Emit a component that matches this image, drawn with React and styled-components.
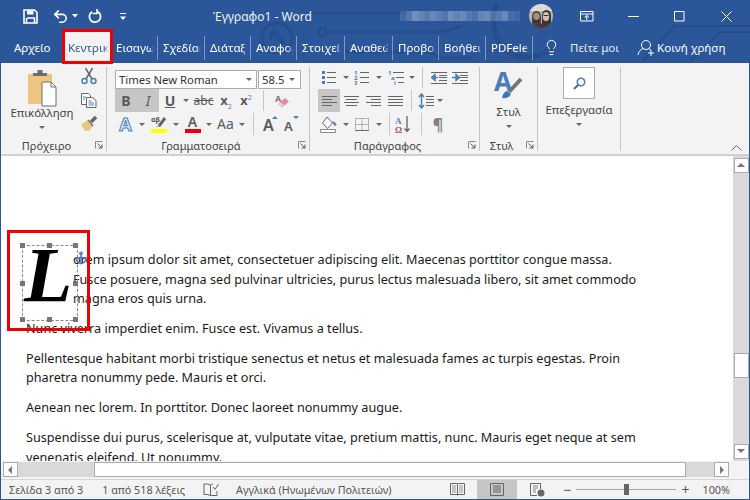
import React from 'react'
import styled, { createGlobalStyle } from 'styled-components'
import { Lightbulb, Anchor, Undo2 } from 'lucide-react'

const GlobalStyle = createGlobalStyle`
    html, body { margin: 0; padding: 0; background: #2b579a; }
    * { box-sizing: border-box; }
`

const UI_FONT = `"Noto Sans", "Open Sans", sans-serif`
const GREY = '#5a5a5a'
const BLUE = '#4a7ebb'

const Window = styled.div`
    position: relative;
    width: 750px;
    height: 500px;
    overflow: hidden;
    background: #2b579a;
    display: flex;
    flex-direction: column;
    font-family: ${UI_FONT};
`

/* ---------- title bar + tabs ---------- */
const Header = styled.header`
    position: relative;
    height: 63px;
    flex: none;
`
const CircuitArt = styled.svg`
    position: absolute;
    top: 0;
    left: 0;
`
const TitleBar = styled.div`
    position: relative;
    height: 32px;
    display: flex;
    align-items: center;
    padding-left: 22px;
    color: #fff;
`
const Slot = styled.div`
    flex: none;
    display: flex;
    align-items: center;
    justify-content: center;
    width: ${p => p.$w}px;
    margin-left: ${p => p.$ml || 0}px;
`
const Title = styled.div`
    margin-left: 82px;
    width: 100px;
    font-size: 12px;
    white-space: nowrap;
    color: #eef2f8;
`
const RightCluster = styled.div`
    margin-left: auto;
    display: flex;
    align-items: center;
    padding-right: 1px;
`
const BlurName = styled.svg`
    margin-right: 9px;
`
const Avatar = styled.svg`
    margin-right: 11px;
`
const TabRow = styled.nav`
    position: relative;
    height: 31px;
    display: flex;
    align-items: center;
    color: #fff;
    font-size: 11.5px;
`
const FileTab = styled.div`
    width: 64px;
    padding-left: 14px;
    flex: none;
`
const ActiveTab = styled.div`
    position: relative;
    align-self: stretch;
    flex: none;
    width: 47px;
    background: #f3f3f3;
    color: #2b579a;
    display: flex;
    align-items: center;
    padding-left: 4px;
    padding-right: 2px;
    &::after {
        content: '';
        position: absolute;
        inset: -3px -2px -1px -2px;
        border: 3px solid #f00000;
    }
`
const Tab = styled.div`
    flex: none;
    width: ${p => p.$w}px;
    height: 24px;
    padding: 0 3px 0 5px;
    display: flex;
    align-items: center;
    border-right: 1px solid rgba(255, 255, 255, .4);
`
const TabText = styled.span`
    display: block;
    overflow: hidden;
    white-space: nowrap;
    -webkit-mask-image: linear-gradient(to right, #000 88%, transparent);
    mask-image: linear-gradient(to right, #000 88%, transparent);
`
const TellMe = styled.div`
    margin-left: 10px;
    display: flex;
    align-items: center;
    color: #e4eaf4;
    span { margin-left: 10px; }
`
const Share = styled.div`
    margin-left: 18px;
    display: flex;
    align-items: center;
    span { margin-left: 2px; white-space: nowrap; }
`

/* ---------- ribbon ---------- */
const Ribbon = styled.div`
    height: 93px;
    flex: none;
    margin: 0 1px;
    display: flex;
    background: #f3f3f3;
    border-bottom: 2px solid #d0d0d0;
    color: #444;
`
const Group = styled.section`
    flex: none;
    width: ${p => p.$w}px;
    display: flex;
    flex-direction: column;
`
const GroupBody = styled.div`
    flex: 1;
    min-height: 0;
    display: flex;
    flex-direction: ${p => p.$col ? 'column' : 'row'};
    padding: ${p => p.$pad || '0'};
`
const GroupFoot = styled.div`
    height: 18px;
    flex: none;
    display: flex;
    align-items: center;
    font-size: 11px;
`
const GroupLabel = styled.div`
    flex: 1;
    text-align: center;
`
const Launcher = styled.svg`
    flex: none;
    margin: 0 3px;
`
const GroupRule = styled.div`
    flex: none;
    width: 1px;
    height: 84px;
    margin-top: 4px;
    background: #c6c6c6;
`
const BigButton = styled.div`
    display: flex;
    flex-direction: column;
    align-items: center;
    width: ${p => p.$w}px;
    margin-left: ${p => p.$ml || 0}px;
    padding-top: ${p => p.$pt || 0}px;
    font-size: 11.4px;
    white-space: nowrap;
`
const BigLabel = styled.div`
    margin-top: ${p => p.$mt}px;
    line-height: 16px;
`
const BigCaret = styled.div`
    flex: none;
    height: 12px;
    display: flex;
    align-items: center;
    &::before {
        content: '';
        border: 3px solid transparent;
        border-top-color: #666;
        border-bottom-width: 0;
    }
`
const SmallStack = styled.div`
    display: flex;
    flex-direction: column;
    align-items: center;
    width: 24px;
    margin-left: 3px;
    padding-top: 5px;
    gap: 8px;
`
const ToolRow = styled.div`
    display: flex;
    height: ${p => p.$h || 23}px;
    flex: none;
`
const Tool = styled.div`
    flex: none;
    display: flex;
    align-items: center;
    justify-content: center;
    width: ${p => p.$w || 22}px;
    background: ${p => p.$on ? '#c6c6c6' : 'transparent'};
`
const CaretBox = styled.div`
    flex: none;
    width: ${p => p.$w || 10}px;
    display: flex;
    align-items: center;
    justify-content: center;
    &::before {
        content: '';
        border: 3px solid transparent;
        border-top-color: #666;
        border-bottom-width: 0;
    }
`
const ToolRule = styled.div`
    flex: none;
    width: ${p => p.$w}px;
    display: flex;
    justify-content: center;
    padding: 1px 0;
    &::before {
        content: '';
        width: 1px;
        background: #c6c6c6;
    }
`
const Combo = styled.div`
    flex: none;
    width: ${p => p.$w}px;
    margin-right: ${p => p.$mr || 0}px;
    height: 19px;
    display: flex;
    align-items: center;
    justify-content: space-between;
    padding: 0 3px 0 3px;
    background: #fff;
    border: 1px solid #ababab;
    color: #333;
    font-size: 11.3px;
`
const Glyph = styled.span`
    font-family: ${p => p.$serif ? '"Liberation Serif", serif' : UI_FONT};
    font-size: ${p => p.$size || 13}px;
    font-weight: ${p => p.$bold ? 700 : 400};
    font-style: ${p => p.$italic ? 'italic' : 'normal'};
    text-decoration: ${p => p.$deco || 'none'};
    color: ${p => p.$color || GREY};
    line-height: 1;
    sub, sup { font-size: 7px; color: ${BLUE}; line-height: 0; font-weight: 400; }
`
const OutlineA = styled.span`
    font-size: 18px;
    font-weight: 700;
    line-height: 1;
    color: #e3edf8;
    -webkit-text-stroke: 1px ${BLUE};
`
const ColorA = styled.div`
    display: flex;
    flex-direction: column;
    align-items: center;
    width: ${p => p.$w || 16}px;
    span { font-size: 14px; line-height: 13px; color: ${GREY}; font-weight: 600; }
    i { display: block; width: 100%; height: 4px; margin-top: 1px; background: ${p => p.$bar}; }
`
const GrowA = styled.div`
    position: relative;
    width: 16px;
    height: 18px;
    span { position: absolute; left: 1px; bottom: 0; line-height: 1; font-size: ${p => p.$size}px; color: ${GREY}; font-weight: 600; }
    i {
        position: absolute;
        right: 0;
        top: 1px;
        border: 3px solid transparent;
        ${p => p.$up ? `border-bottom-color: ${BLUE}; border-top-width: 0;` : `border-top-color: ${BLUE}; border-bottom-width: 0;`}
    }
`
const SearchBox = styled.div`
    width: 32px;
    height: 32px;
    background: #fff;
    border: 1px solid #ababab;
    display: flex;
    align-items: center;
    justify-content: center;
`
const Collapse = styled.div`
    flex: 1;
    display: flex;
    justify-content: flex-end;
    align-items: flex-end;
    padding: 0 7px 3px 0;
`

/* ---------- document ---------- */
const DocArea = styled.div`
    flex: 1;
    min-height: 0;
    margin: 0 1px;
    display: flex;
    background: #fff;
`
const Page = styled.main`
    flex: 1;
    min-width: 0;
    overflow: hidden;
    padding: 94px 0 0 25px;
    font-size: 12.65px;
    line-height: 19.5px;
    color: #1a1a1a;
    white-space: nowrap;
`
const Para = styled.p`
    margin: 0 0 10.4px;
`
const DropCap = styled.div`
    position: relative;
    float: left;
    width: 47px;
    height: 58px;
`
const CapFrame = styled.div`
    position: absolute;
    left: -4px;
    top: -5px;
    width: 56px;
    height: 76px;
    padding-left: 1px;
    border: 1px dashed #8a8a8a;
    font-family: "Liberation Serif", serif;
    font-size: 79px;
    font-weight: 700;
    font-style: italic;
    line-height: 57px;
    color: #000;
`
const Handle = styled.i`
    position: absolute;
    width: 5px;
    height: 5px;
    background: #767676;
    left: ${p => p.$x}px;
    top: ${p => p.$y}px;
`
const CapAnchor = styled.div`
    position: absolute;
    left: 48px;
    top: 1px;
    color: ${BLUE};
    display: flex;
`
const RedMark = styled.div`
    position: absolute;
    left: -19px;
    top: -20px;
    width: 83px;
    height: 101px;
    border: 3px solid #f00000;
`
const VScroll = styled.div`
    flex: none;
    width: 16px;
    background: #d9d9d9;
    display: flex;
    flex-direction: column;
    align-items: center;
    padding: 2px 0 2px;
`
const ScrollBtn = styled.div`
    flex: none;
    width: 15px;
    height: 15px;
    background: #fdfdfd;
    border: 1px solid #ababab;
    display: flex;
    align-items: center;
    justify-content: center;
    svg { display: block; }
`
const VThumb = styled.div`
    width: 15px;
    height: 25px;
    margin-top: 180px;
    margin-bottom: auto;
    background: #fff;
    border: 1px solid #ababab;
`
const HScroll = styled.div`
    height: 18px;
    flex: none;
    margin: 0 1px;
    background: #f3f3f3;
    display: flex;
    align-items: flex-start;
    padding: 1px 0 0 2px;
`
const HTrack = styled.div`
    flex: none;
    width: 726px;
    height: 15px;
    background: #d9d9d9;
    display: flex;
    align-items: center;
`
const HThumb = styled.div`
    width: 594px;
    height: 15px;
    margin-left: 76px;
    margin-right: 28px;
    background: #fff;
    border: 1px solid #ababab;
`

/* ---------- status bar ---------- */
const StatusBar = styled.footer`
    height: 20px;
    flex: none;
    margin: 0 1px 1px;
    display: flex;
    align-items: center;
    background: #f3f3f3;
    border-top: 1px solid #d6d6d6;
    font-size: 10.8px;
    color: #555;
    white-space: nowrap;
`
const StatusText = styled.span`
    margin-left: ${p => p.$ml}px;
`
const ViewBtn = styled.div`
    flex: none;
    align-self: stretch;
    width: 40px;
    display: flex;
    align-items: center;
    justify-content: center;
    background: ${p => p.$on ? '#c6c6c6' : 'transparent'};
`
const StatusRight = styled.div`
    margin-left: auto;
    display: flex;
    align-items: center;
    align-self: stretch;
`
const Zoom = styled.div`
    display: flex;
    align-items: center;
    margin-left: 6px;
`
const ZoomSign = styled.span`
    font-size: 14px;
    line-height: 1;
`
const SliderTrack = styled.div`
    position: relative;
    width: 100px;
    height: 1px;
    margin: 0 5px;
    background: #a8a8a8;
    &::after {
        content: '';
        position: absolute;
        left: 48px;
        top: -5px;
        width: 5px;
        height: 11px;
        background: #666;
    }
`
const ZoomPct = styled.span`
    margin: 0 19px 0 13px;
`

/* ---------- drawings ---------- */
const Svg = ({ w, h, children }) => (
    <svg width={w} height={h} viewBox={`0 0 ${w} ${h}`} fill="none" style={{ display: 'block', flex: 'none' }}>{children}</svg>
)

const SaveIcon = () => (
    <Svg w={15} h={15}>
        <path d="M1 1h10.5L14 3.5V14H1z" stroke="#fff" strokeWidth="1.6" />
        <path d="M4 1.5h6.5v4H4z" fill="#fff" />
        <path d="M4 9h7.5v5" stroke="#fff" strokeWidth="1.6" />
        <path d="M3.5 9v5" stroke="#fff" strokeWidth="1.6" />
    </Svg>
)
const RepeatIcon = () => (
    <Svg w={16} h={16}>
        <path d="M10.5 3.6a5.6 5.6 0 1 1-5.4.2" stroke="#fff" strokeWidth="1.8" />
        <path d="M10 1v4.5H5.5" stroke="#fff" strokeWidth="1.6" />
    </Svg>
)
const CustomizeIcon = () => (
    <Svg w={8} h={9}>
        <path d="M1 1.5h6" stroke="#fff" />
        <path d="M1 4.5h6L4 8z" fill="#fff" />
    </Svg>
)
const SmallCaret = () => (
    <Svg w={6} h={4}><path d="M0 0h6L3 3.5z" fill="#fff" /></Svg>
)
const RestoreIcon = () => (
    <Svg w={14} h={11}>
        <path d="M.5.5h12.5v9.5H.5zM.5 3h12.5" stroke="#fff" />
        <path d="M6.75 9V4.5M4.5 6.5l2.25-2.2L9 6.5" stroke="#fff" />
    </Svg>
)
const MinIcon = () => <Svg w={11} h={3}><path d="M0 1.5h11" stroke="#fff" /></Svg>
const MaxIcon = () => <Svg w={11} h={11}><path d="M.5.5h9.5v9.5H.5z" stroke="#fff" /></Svg>
const CloseIcon = () => <Svg w={11} h={11}><path d="M.5.5l10 10M10.5.5l-10 10" stroke="#fff" /></Svg>
const ShareIcon = () => (
    <Svg w={18} h={17}>
        <circle cx="9" cy="6" r="4.5" stroke="#fff" />
        <path d="M1 16c.5-4 3-5.5 5-6.5M12 10c.8.3 1.4.7 2 1.2" stroke="#fff" />
        <path d="M14 11v6M11 14h6" stroke="#fff" />
    </Svg>
)
const AvatarArt = () => (
    <Avatar width="24" height="24" viewBox="0 0 24 24">
        <defs><clipPath id="av"><circle cx="12" cy="12" r="12" /></clipPath></defs>
        <g clipPath="url(#av)">
            <rect width="24" height="24" fill="#b9b5ae" />
            <rect y="0" width="24" height="7" fill="#dcdad6" />
            <path d="M3 24V13q0-6 4.5-6t4.5 6v11z" fill="#4c4541" />
            <ellipse cx="7.5" cy="12.5" rx="3.2" ry="3.8" fill="#a58f80" />
            <path d="M4.5 14q3 4.5 6 0v5h-6z" fill="#3a3431" />
            <path d="M13 24V12q0-6 4.5-6t4.5 6v12z" fill="#3a3432" />
            <ellipse cx="17" cy="12.5" rx="3.2" ry="4.5" fill="#d8bfb0" />
            <path d="M14.5 11.5h5" stroke="#333" strokeWidth="1.2" />
            <path d="M4 24q3-5 8-4.5t8 4.5z" fill="#50323f" />
        </g>
    </Avatar>
)

const BLUR = [.12, .2, .34, .28, .22, .3, .24, .18, .32, .26, .3, .2, .16, .28, .3, .2, .22, .3, .14, .1]
const BlurArt = () => (
    <BlurName width="120" height="14" viewBox="0 0 120 14">
        {BLUR.map((o, i) => <rect key={`blur-${i}`} x={i * 6} y="2" width="6" height="10" fill="#fff" opacity={o} />)}
    </BlurName>
)

const Circuit = () => (
    <CircuitArt width="750" height="63" viewBox="0 0 750 63" fill="none" stroke="#264e8d" strokeWidth="3">
        <path d="M312 13h95" />
        <circle cx="277" cy="38" r="15" />
        <path d="M284 44l-12-12M271 40v-8h8" />
        <circle cx="323" cy="32" r="4" />
        <path d="M327 32h115l20-6" />
        <path d="M345 52h85l12 6h30" />
        <path d="M497 3a42 42 0 0 0 12 50 42 42 0 0 0 45-6" strokeWidth="5" />
        <path d="M642 62l32-36h76M690 62l30-30h30" strokeWidth="2" />
    </CircuitArt>
)

const Clipboard = () => (
    <Svg w={30} h={38}>
        <path d="M1 4h24v25H15v5H1z" fill="#eec57e" />
        <path d="M6 6V3h4.5V0h5v3H20v3z" fill="#6d6d6d" />
        <path d="M15 12h9l5 5v19H15z" fill="#fff" stroke="#6e6e6e" />
        <path d="M24 12v5h5" stroke="#6e6e6e" />
    </Svg>
)
const Scissors = () => (
    <Svg w={16} h={17}>
        <circle cx="3.5" cy="13" r="2.5" stroke={BLUE} strokeWidth="1.5" />
        <circle cx="12.5" cy="13" r="2.5" stroke={BLUE} strokeWidth="1.5" />
        <path d="M5 11L11.5 0M11 11L4.5 0" stroke="#666" strokeWidth="1.5" />
    </Svg>
)
const CopyIcon = () => (
    <Svg w={16} h={15}>
        <path d="M.5.5h7l2 2v9H.5z" fill="#fff" stroke="#666" />
        <path d="M5.5 4.5h6l3.5 3v7H5.5z" fill="#fff" stroke="#666" />
        <path d="M7.5 8h3M7.5 10h5.5M7.5 12h5.5M2 4h3M2 6h2" stroke={BLUE} />
    </Svg>
)
const BrushIcon = () => (
    <Svg w={17} h={15}>
        <path d="M0 8.5L7 4l5 6-4 5H4z" fill="#eec57e" />
        <path d="M7 4l5 6" stroke="#777" strokeWidth="1.5" />
        <path d="M10 6l5-5" stroke="#666" strokeWidth="3.5" />
    </Svg>
)
const Highlighter = () => (
    <ColorA $w={16} $bar="#ffff00">
        <Svg w={16} h={13}>
            <text x="0" y="7" fontSize="7" fontWeight="700" fill="#555" fontFamily="Noto Sans">αβ</text>
            <path d="M8 11l6-8" stroke="#666" strokeWidth="3" />
            <path d="M5 12l3-2 1.5 1.5z" fill="#888" />
        </Svg>
        <i />
    </ColorA>
)
const Eraser = () => (
    <Svg w={15} h={14}>
        <text x="0" y="8" fontSize="9" fontWeight="700" fill="#777" fontFamily="Noto Sans">A</text>
        <path d="M3 10l7-6 4 3.5-7 6z" fill="#e8879b" />
        <path d="M3 10l2.5-2 4 3.5L7 13.5z" fill="#f4c7d0" />
    </Svg>
)

const Lines = ({ rows, x = 0, w = 16 }) => rows.map(([y, a, b], i) => (
    <path key={`l-${i}`} d={`M${x + a} ${y}.5H${x + (b ?? w)}`} stroke="#666" />
))
const ListIcon = ({ kind }) => (
    <Svg w={16} h={15}>
        {kind === 'bullets' && [2, 7, 12].map(y => <rect key={y} x="1" y={y - 1} width="3" height="3" fill={BLUE} />)}
        {kind === 'numbers' && [['1', 5], ['2', 10], ['3', 15]].map(([n, y]) => <text key={n} x="0" y={y} fontSize="6" fontWeight="700" fill={BLUE} fontFamily="Noto Sans">{n}</text>)}
        {kind === 'multi' && <>
            <text x="0" y="5" fontSize="6" fontWeight="700" fill={BLUE} fontFamily="Noto Sans">1</text>
            <text x="3" y="10" fontSize="6" fontWeight="700" fill={BLUE} fontFamily="Noto Sans">a</text>
            <text x="6" y="15" fontSize="6" fontWeight="700" fill={BLUE} fontFamily="Noto Sans">i</text>
        </>}
        {kind === 'multi'
            ? <Lines rows={[[2, 5], [7, 8], [12, 10]]} />
            : <Lines rows={[[2, 6, 15], [7, 6, 15], [12, 6, 15]]} />}
    </Svg>
)
const IndentIcon = ({ out }) => (
    <Svg w={16} h={12}>
        <Lines rows={[[0, 0], [11, 0]]} />
        <Lines rows={[[3, 8], [5, 8], [8, 8]]} />
        <path d={out ? 'M7 5.5H3M4 2.5L.5 5.5 4 8.5z' : 'M0 5.5h4M4 2.5l3.5 3L4 8.5z'} stroke={BLUE} fill={BLUE} strokeWidth="1.4" />
    </Svg>
)
const AlignIcon = ({ rows }) => (
    <Svg w={15} h={11}><Lines rows={rows} /></Svg>
)
const LineSpacing = () => (
    <Svg w={17} h={16}>
        <path d="M3.5 1v14M1 4l2.5-3L6 4M1 12l2.5 3L6 12" stroke={BLUE} strokeWidth="1.5" />
        <Lines rows={[[3, 8], [6, 8], [9, 8], [12, 8]]} w={16} />
    </Svg>
)
const Shading = () => (
    <Svg w={18} h={17}>
        <path d="M7 1l5.5 6-5 5.5L2.5 7z" fill="#fff" stroke="#666" />
        <path d="M12 5q4 1 4.5 4l-2 1z" fill={BLUE} />
        <path d="M.5 13.5h15v3H.5z" fill="#fff" stroke="#888" />
    </Svg>
)
const Borders = () => (
    <Svg w={14} h={13}>
        <path d="M.5.5h13v12H.5zM7 .5v12M.5 6.5h13" stroke="#777" strokeDasharray="1 1" />
        <path d="M.5 12.5h13" stroke="#666" />
    </Svg>
)
const SortIcon = () => (
    <Svg w={16} h={17}>
        <text x="0" y="8" fontSize="9" fontWeight="700" fill={BLUE} fontFamily="Liberation Serif">A</text>
        <text x="0" y="16.5" fontSize="9" fontWeight="700" fill="#a2506f" fontFamily="Liberation Serif">Ω</text>
        <path d="M12 0v15M9.5 12.5L12 15.5l2.5-3" stroke="#666" strokeWidth="1.3" />
    </Svg>
)
const StyleIcon = () => (
    <Svg w={30} h={30}>
        <text x="0" y="21" fontSize="26" fontWeight="700" fill={BLUE} fontFamily="Noto Sans">A</text>
        <path d="M15 22l12-13" stroke="#767676" strokeWidth="4" />
        <path d="M8 28q1-6 5-7l4 3q-2 5-9 4z" fill="#3b78c4" />
    </Svg>
)
const SearchIcon = () => (
    <Svg w={13} h={13}>
        <circle cx="8" cy="5" r="3.7" stroke={BLUE} strokeWidth="1.6" />
        <path d="M5.3 7.7L1 12" stroke="#666" strokeWidth="2" />
    </Svg>
)
const LauncherIcon = () => (
    <Launcher width="8" height="8" viewBox="0 0 8 8" fill="none">
        <path d="M.5 7.5v-7h7" stroke="#888" />
        <path d="M2.5 2.5l4 4M7 3.5V7H3.5" stroke="#555" />
    </Launcher>
)
const BookCheck = () => (
    <Svg w={16} h={13}>
        <path d="M7.5 2Q4 .5 1 1v10.5q3-.5 6.5 1V2q1-1 2.5-1" stroke="#666" />
        <path d="M8 12.5h6V8" stroke="#666" />
        <path d="M10 4l2 2.5L15.5 1" stroke="#666" />
    </Svg>
)
const ReadIcon = () => (
    <Svg w={15} h={13}>
        <path d="M.5.5h6.5l.5.5.5-.5h6.5v11H8l-.5.8-.5-.8H.5zM7.5 1v11" stroke="#666" />
        <path d="M2 3h4M2 5h4M2 7h4M2 9h4M9 3h4M9 5h4M9 7h4M9 9h4" stroke="#999" />
    </Svg>
)
const PrintIcon = () => (
    <Svg w={14} h={13}>
        <path d="M.5.5h13v12H.5z" stroke="#666" />
        <path d="M3 3h8M3 5h8M3 7h8M3 9h8" stroke="#666" />
    </Svg>
)
const WebIcon = () => (
    <Svg w={15} h={14}>
        <path d="M7 12.5H.5V.5h10V6" stroke="#666" />
        <path d="M3 3h5M3 5h5M3 7h3M3 9h3" stroke="#888" />
        <circle cx="11" cy="10" r="3.5" fill="#666" />
    </Svg>
)
const Chevron = () => (
    <Svg w={11} h={6}><path d="M.5 5.5l5-5 5 5" stroke="#666" /></Svg>
)
const Tri = ({ dir }) => {
    const d = { up: 'M1 6h8L5 2z', down: 'M1 2h8L5 6z', left: 'M6 1v8L2 5z', right: 'M3 1v8l4-4z' }[dir]
    return <svg width="10" height="10" viewBox="0 0 10 10"><path d={d} fill="#777" /></svg>
}

const TABS = [
    ['Εισαγωγή', 47], ['Σχεδίαση', 47], ['Διάταξη', 46], ['Αναφορές', 46], ['Στοιχεία', 48],
    ['Αναθεώρηση', 48], ['Προβολή', 46], ['Βοήθεια', 47], ['PDFelement', 47],
]

const HANDLES = [[-3, -3], [24, -3], [50, -3], [-3, 35], [50, 35], [-3, 71], [24, 71], [50, 71]]

export default function App() {
    return (
        <Window>
            <GlobalStyle />
            <Header>
                <Circuit />
                <TitleBar>
                    <Slot $w={16}><SaveIcon /></Slot>
                    <Slot $w={20} $ml={12}><Undo2 size={17} color="#fff" strokeWidth={2.2} /></Slot>
                    <Slot $w={10}><SmallCaret /></Slot>
                    <Slot $w={20} $ml={5}><RepeatIcon /></Slot>
                    <Slot $w={16} $ml={10}><CustomizeIcon /></Slot>
                    <Title>Έγγραφο1  -  Word</Title>
                    <RightCluster>
                        <BlurArt />
                        <AvatarArt />
                        <Slot $w={46}><RestoreIcon /></Slot>
                        <Slot $w={46}><MinIcon /></Slot>
                        <Slot $w={47}><MaxIcon /></Slot>
                        <Slot $w={46}><CloseIcon /></Slot>
                    </RightCluster>
                </TitleBar>
                <TabRow>
                    <FileTab>Αρχείο</FileTab>
                    <ActiveTab><TabText>Κεντρική</TabText></ActiveTab>
                    {TABS.map(([label, w]) => (
                        <Tab key={label} $w={w}><TabText>{label}</TabText></Tab>
                    ))}
                    <TellMe>
                        <Lightbulb size={17} color="#fff" strokeWidth={1.4} />
                        <span>Πείτε μοι</span>
                    </TellMe>
                    <Share>
                        <ShareIcon />
                        <span>Κοινή χρήση</span>
                    </Share>
                </TabRow>
            </Header>

            <Ribbon>
                <Group $w={105}>
                    <GroupBody>
                        <BigButton $w={64} $ml={9} $pt={7}>
                            <Clipboard />
                            <BigLabel $mt={-3}>Επικόλληση</BigLabel>
                            <BigCaret />
                        </BigButton>
                        <SmallStack>
                            <Scissors />
                            <CopyIcon />
                            <BrushIcon />
                        </SmallStack>
                    </GroupBody>
                    <GroupFoot><GroupLabel>Πρόχειρο</GroupLabel><LauncherIcon /></GroupFoot>
                </Group>
                <GroupRule />
                <Group $w={202}>
                    <GroupBody $col $pad="7px 0 0 8px">
                        <ToolRow $h={19}>
                            <Combo $w={142} $mr={1}>
                                <span>Times New Roman</span><CaretBox $w={8} />
                            </Combo>
                            <Combo $w={43}>
                                <span>58.5</span><CaretBox $w={10} />
                            </Combo>
                        </ToolRow>
                        <ToolRow>
                            <Tool $on><Glyph $bold $size={14}>B</Glyph></Tool>
                            <Tool $on><Glyph $italic $size={14}>I</Glyph></Tool>
                            <Tool><Glyph $bold $size={14} $deco="underline">U</Glyph></Tool>
                            <CaretBox />
                            <Tool $w={25}><Glyph $size={12} $deco="line-through">abc</Glyph></Tool>
                            <Tool $w={20}><Glyph $bold $size={13}>x<sub>2</sub></Glyph></Tool>
                            <Tool $w={20}><Glyph $bold $size={13}>x<sup>2</sup></Glyph></Tool>
                            <ToolRule $w={14} />
                            <Tool $w={24}><Eraser /></Tool>
                        </ToolRow>
                        <ToolRow $h={24}>
                            <Tool $w={21}><OutlineA>A</OutlineA></Tool>
                            <CaretBox $w={11} />
                            <Tool $w={24}><Highlighter /></Tool>
                            <CaretBox $w={9} />
                            <Tool $w={25}><ColorA $bar="#f00000"><span>A</span><i /></ColorA></Tool>
                            <CaretBox $w={8} />
                            <Tool $w={25}><Glyph $size={14}>Aa</Glyph></Tool>
                            <CaretBox $w={8} />
                            <ToolRule $w={14} />
                            <Tool $w={20}><GrowA $size={16} $up><span>A</span><i /></GrowA></Tool>
                            <Tool $w={22}><GrowA $size={13}><span>A</span><i /></GrowA></Tool>
                        </ToolRow>
                    </GroupBody>
                    <GroupFoot><GroupLabel>Γραμματοσειρά</GroupLabel><LauncherIcon /></GroupFoot>
                </Group>
                <GroupRule />
                <Group $w={169}>
                    <GroupBody $col $pad="3px 0 0 8px">
                        <ToolRow>
                            <Tool><ListIcon kind="bullets" /></Tool>
                            <CaretBox $w={11} />
                            <Tool><ListIcon kind="numbers" /></Tool>
                            <CaretBox $w={11} />
                            <Tool $w={24}><ListIcon kind="multi" /></Tool>
                            <CaretBox $w={7} />
                            <ToolRule $w={14} />
                            <Tool $w={20}><IndentIcon out /></Tool>
                            <Tool><IndentIcon /></Tool>
                        </ToolRow>
                        <ToolRow>
                            <Tool $on><AlignIcon rows={[[1, 0, 15], [4, 0, 10], [7, 0, 15], [10, 0, 10]]} /></Tool>
                            <Tool><AlignIcon rows={[[1, 0, 15], [4, 2, 13], [7, 0, 15], [10, 2, 13]]} /></Tool>
                            <Tool><AlignIcon rows={[[1, 0, 15], [4, 5, 15], [7, 0, 15], [10, 5, 15]]} /></Tool>
                            <Tool><AlignIcon rows={[[1, 0, 15], [4, 0, 15], [7, 0, 15], [10, 0, 15]]} /></Tool>
                            <ToolRule $w={10} />
                            <Tool $w={20}><LineSpacing /></Tool>
                            <CaretBox $w={8} />
                        </ToolRow>
                        <ToolRow $h={24}>
                            <Tool><Shading /></Tool>
                            <CaretBox $w={11} />
                            <Tool><Borders /></Tool>
                            <CaretBox $w={11} />
                            <ToolRule $w={10} />
                            <Tool $w={18}><SortIcon /></Tool>
                            <ToolRule $w={18} />
                            <Tool $w={16}><Glyph $size={16} $bold $color="#808080">¶</Glyph></Tool>
                        </ToolRow>
                    </GroupBody>
                    <GroupFoot><GroupLabel>Παράγραφος</GroupLabel><LauncherIcon /></GroupFoot>
                </Group>
                <GroupRule />
                <Group $w={57}>
                    <GroupBody>
                        <BigButton $w={57} $pt={7}>
                            <StyleIcon />
                            <BigLabel $mt={4}>Στυλ</BigLabel>
                            <BigCaret />
                        </BigButton>
                    </GroupBody>
                    <GroupFoot><GroupLabel>Στυλ</GroupLabel><LauncherIcon /></GroupFoot>
                </Group>
                <GroupRule />
                <Group $w={82}>
                    <GroupBody>
                        <BigButton $w={82} $pt={4}>
                            <SearchBox><SearchIcon /></SearchBox>
                            <BigLabel $mt={3}>Επεξεργασία</BigLabel>
                            <BigCaret />
                        </BigButton>
                    </GroupBody>
                </Group>
                <GroupRule />
                <Collapse><Chevron /></Collapse>
            </Ribbon>

            <DocArea>
                <Page>
                    <Para>
                        <DropCap>
                            <RedMark />
                            <CapFrame>
                                L
                                {HANDLES.map(([x, y]) => <Handle key={`${x}-${y}`} $x={x} $y={y} />)}
                            </CapFrame>
                            <CapAnchor><Anchor size={14} strokeWidth={2.6} /></CapAnchor>
                        </DropCap>
                        orem ipsum dolor sit amet, consectetuer adipiscing elit. Maecenas porttitor congue massa.<br />
                        Fusce posuere, magna sed pulvinar ultricies, purus lectus malesuada libero, sit amet commodo<br />
                        magna eros quis urna.
                    </Para>
                    <Para>Nunc viverra imperdiet enim. Fusce est. Vivamus a tellus.</Para>
                    <Para>
                        Pellentesque habitant morbi tristique senectus et netus et malesuada fames ac turpis egestas. Proin<br />
                        pharetra nonummy pede. Mauris et orci.
                    </Para>
                    <Para>Aenean nec lorem. In porttitor. Donec laoreet nonummy augue.</Para>
                    <Para>
                        Suspendisse dui purus, scelerisque at, vulputate vitae, pretium mattis, nunc. Mauris eget neque at sem<br />
                        venenatis eleifend. Ut nonummy.
                    </Para>
                </Page>
                <VScroll>
                    <ScrollBtn><Tri dir="up" /></ScrollBtn>
                    <VThumb />
                    <ScrollBtn><Tri dir="down" /></ScrollBtn>
                </VScroll>
            </DocArea>

            <HScroll>
                <HTrack>
                    <ScrollBtn><Tri dir="left" /></ScrollBtn>
                    <HThumb />
                    <ScrollBtn><Tri dir="right" /></ScrollBtn>
                </HTrack>
            </HScroll>

            <StatusBar>
                <StatusText $ml={8}>Σελίδα 3 από 3</StatusText>
                <StatusText $ml={19}>1 από 518 λέξεις</StatusText>
                <Slot $w={16} $ml={18}><BookCheck /></Slot>
                <StatusText $ml={17}>Αγγλικά (Ηνωμένων Πολιτειών)</StatusText>
                <StatusRight>
                    <ViewBtn><ReadIcon /></ViewBtn>
                    <ViewBtn $on><PrintIcon /></ViewBtn>
                    <ViewBtn><WebIcon /></ViewBtn>
                    <Zoom>
                        <ZoomSign>−</ZoomSign>
                        <SliderTrack />
                        <ZoomSign>+</ZoomSign>
                        <ZoomPct>100%</ZoomPct>
                    </Zoom>
                </StatusRight>
            </StatusBar>
        </Window>
    )
}
